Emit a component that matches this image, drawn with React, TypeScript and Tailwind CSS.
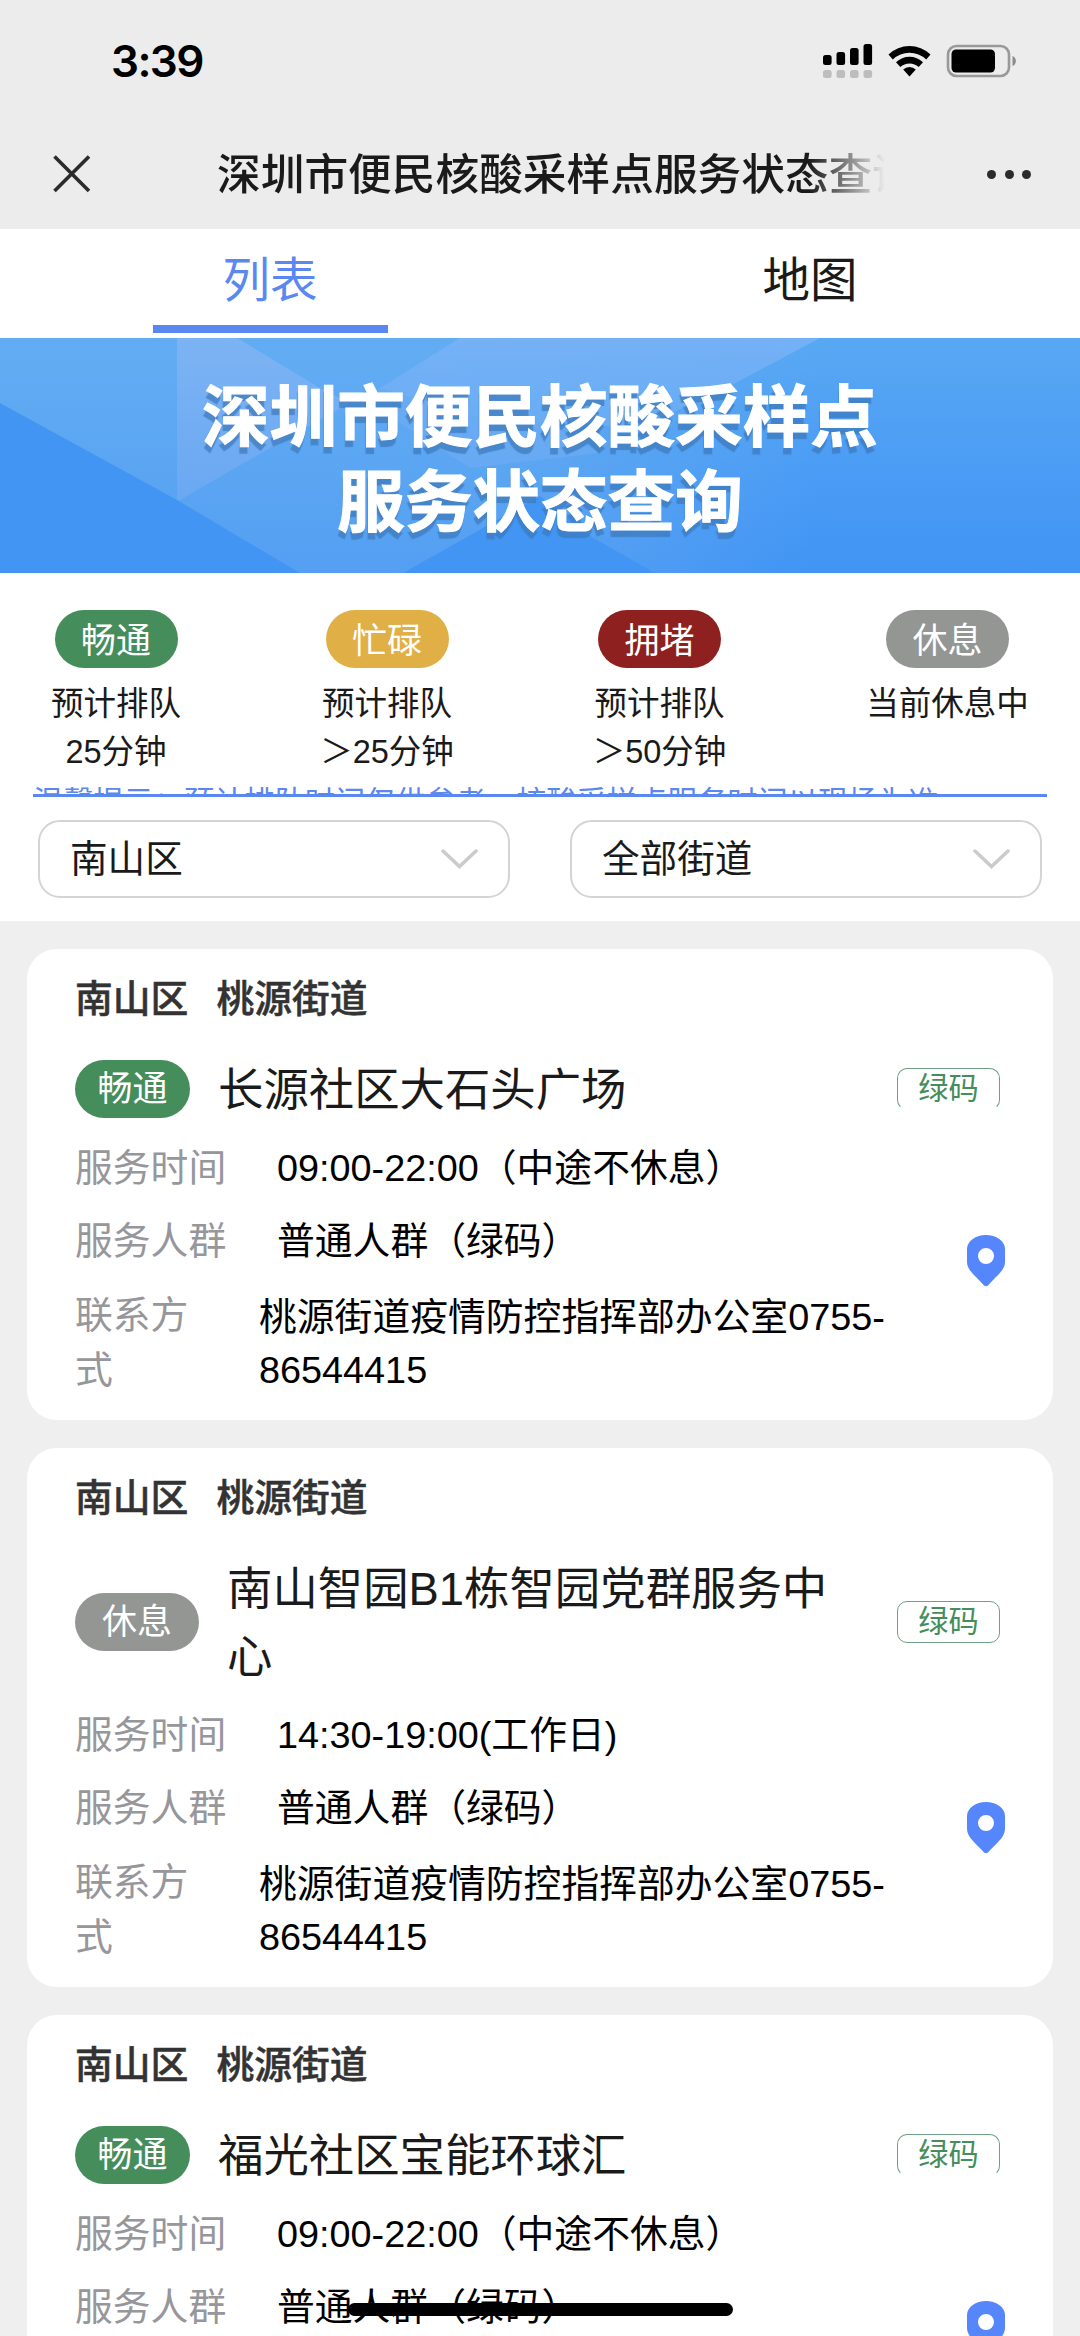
import { clsx } from 'clsx';

type Status = 'smooth' | 'busy' | 'crowded' | 'resting';

interface Site {
  district: string;
  street: string;
  status: Status;
  name: string;
  hours: string;
  audience: string;
  contact: string;
  code: string;
}

const STATUS_LABEL: Record<Status, string> = {
  smooth: '畅通',
  busy: '忙碌',
  crowded: '拥堵',
  resting: '休息',
};

const STATUS_COLOR: Record<Status, string> = {
  smooth: 'bg-[#458d5b]',
  busy: 'bg-[#e0af45]',
  crowded: 'bg-[#8f2020]',
  resting: 'bg-[#949694]',
};

const LEGEND: { status: Status; lines: string[]; column: string }[] = [
  { status: 'smooth', lines: ['预计排队', '25分钟'], column: 'w-[232px]' },
  { status: 'busy', lines: ['预计排队', '＞25分钟'], column: 'w-[310px]' },
  { status: 'crowded', lines: ['预计排队', '＞50分钟'], column: 'w-[235px]' },
  { status: 'resting', lines: ['当前休息中'], column: 'w-[303px] pl-[38px]' },
];

const SITES: Site[] = [
  {
    district: '南山区',
    street: '桃源街道',
    status: 'smooth',
    name: '长源社区大石头广场',
    hours: '09:00-22:00（中途不休息）',
    audience: '普通人群（绿码）',
    contact: '桃源街道疫情防控指挥部办公室0755-\n86544415',
    code: '绿码',
  },
  {
    district: '南山区',
    street: '桃源街道',
    status: 'resting',
    name: '南山智园B1栋智园党群服务中心',
    hours: '14:30-19:00(工作日)',
    audience: '普通人群（绿码）',
    contact: '桃源街道疫情防控指挥部办公室0755-\n86544415',
    code: '绿码',
  },
  {
    district: '南山区',
    street: '桃源街道',
    status: 'smooth',
    name: '福光社区宝能环球汇',
    hours: '09:00-22:00（中途不休息）',
    audience: '普通人群（绿码）',
    contact: '桃源街道疫情防控指挥部办公室0755-\n86544415',
    code: '绿码',
  },
];

export default function App() {
  return (
    <div className="relative flex h-[2336px] w-[1080px] flex-col overflow-hidden bg-[#efefef] font-['Liberation_Sans','Noto_Sans_CJK_SC',sans-serif] text-[#1a1a1a]">
      <StatusBar />
      <TitleBar />
      <Tabs />
      <Banner />
      <section className="h-[348px] shrink-0 bg-white pt-[37px]">
        <Legend />
        <Notice />
        <div className="mt-[23px] flex justify-between px-[38px]">
          <Select value="南山区" />
          <Select value="全部街道" />
        </div>
      </section>
      <main className="flex flex-col gap-7 px-[27px] pt-7">
        {SITES.map((site) => (
          <SiteCard key={site.name} site={site} />
        ))}
      </main>
      {/* Home indicator floats over the list */}
      <div className="absolute top-[2303px] left-[348px] h-[13px] w-[385px] rounded-full bg-black" />
    </div>
  );
}

function StatusBar() {
  return (
    <div className="flex h-[120px] shrink-0 items-start justify-between bg-[#ececec] pr-[63px] pl-[111px]">
      <span className="mt-[34px] font-['Inter',sans-serif] text-[44px] leading-[54px] font-semibold tracking-[-1.6px] text-black">
        3:39
      </span>
      <div className="mt-[43px] flex items-start">
        <svg width="50" height="36" viewBox="0 0 50 36">
          {[12, 9, 5, 1].map((y, i) => (
            <g key={y}>
              <rect x={i * 13.5} y={y} width="8.6" height={22 - y} rx="2.5" fill="#000" />
              <rect x={i * 13.5} y="27" width="8.6" height="8" rx="2.5" fill="#bdbdbd" />
            </g>
          ))}
        </svg>
        <svg className="ml-[15px]" width="44" height="36" viewBox="0 0 44 36">
          <path d="M0.5 11.5a30.5 30.5 0 0 1 42 0l-4.3 4.9a24.2 24.2 0 0 0-33.4 0z" />
          <path d="M8 19.2a19.6 19.6 0 0 1 27 0l-4.3 4.9a13.4 13.4 0 0 0-18.4 0z" />
          <path d="M15.2 26.6a9 9 0 0 1 12.6 0L21.5 33.5z" />
        </svg>
        <svg className="ml-[14px]" width="71" height="36" viewBox="0 0 71 36">
          <rect x="2" y="3" width="61" height="30" rx="8.5" fill="none" stroke="#999" strokeWidth="2.6" />
          <rect x="5.5" y="6.5" width="43.5" height="23" rx="4.5" />
          <path d="M66.500 13c4.500 1.500 4.500 8.500 0 10z" fill="#8c8c8c" />
        </svg>
      </div>
    </div>
  );
}

function TitleBar() {
  return (
    <div className="flex h-[109px] shrink-0 items-center bg-[#ececec] pl-[53px]">
      <svg className="mb-[2px]" width="38" height="38" viewBox="0 0 38 38" fill="none" stroke="#2b2b2b" strokeWidth="3.6">
        <path d="M1.500 1.500 36 36M36 1.500 1.500 36" />
      </svg>
      <h1 className="ml-[126px] w-[700px] text-[43.7px] leading-[60px] font-medium whitespace-nowrap [mask-image:linear-gradient(to_right,#000_592px,transparent_668px)]">
        深圳市便民核酸采样点服务状态查询
      </h1>
      <div className="ml-[70px] flex gap-[8.5px]">
        <span className="size-[9px] rounded-full bg-[#2b2b2b]" />
        <span className="size-[9px] rounded-full bg-[#2b2b2b]" />
        <span className="size-[9px] rounded-full bg-[#2b2b2b]" />
      </div>
    </div>
  );
}

function Tabs() {
  return (
    <nav className="flex h-[109px] shrink-0 bg-white text-[47.5px]">
      <div className="flex w-1/2 flex-col items-center text-[#5b87f0]">
        <span className="h-24 leading-[104px]">列表</span>
        <span className="h-2 w-[235px] bg-[#5b87f0]" />
      </div>
      <div className="flex w-1/2 flex-col items-center">
        <span className="h-24 leading-[104px]">地图</span>
      </div>
    </nav>
  );
}

function Banner() {
  return (
    <header className="grid h-[235px] shrink-0 overflow-hidden">
      <BannerArt />
      <h2 className="col-start-1 row-start-1 pt-[37px] text-center text-[67.6px] leading-[85px] font-bold text-white [-webkit-text-stroke:1px_#fff] [text-shadow:-1px_7px_1px_rgba(60,120,185,0.7)]">
        深圳市便民核酸采样点
        <br />
        服务状态查询
      </h2>
    </header>
  );
}

function BannerArt() {
  return (
    <svg className="col-start-1 row-start-1" width="1080" height="235" viewBox="0 0 1080 235">
      <defs>
        <linearGradient id="sky" x1="0" y1="0" x2="0" y2="1">
          <stop offset="0" stopColor="#62adf2" />
          <stop offset="1" stopColor="#559ff3" />
        </linearGradient>
        <linearGradient id="deep" x1="0" y1="0" x2="0" y2="1">
          <stop offset="0" stopColor="#58a8f3" />
          <stop offset="0.6" stopColor="#4a9bf5" />
          <stop offset="1" stopColor="#4094f3" />
        </linearGradient>
        <linearGradient id="edge" x1="0" y1="0" x2="1" y2="0">
          <stop offset="0" stopColor="#fff" stopOpacity="0" />
          <stop offset="1" stopColor="#fff" />
        </linearGradient>
        <mask id="fade">
          <rect x="560" width="260" height="235" fill="url(#edge)" />
          <rect x="820" width="260" height="235" fill="#fff" />
        </mask>
        <linearGradient id="haze" x1="0" y1="0" x2="0" y2="1">
          <stop offset="0" stopColor="#7cb3f4" />
          <stop offset="1" stopColor="#6aa8f2" />
        </linearGradient>
        <linearGradient id="beam" x1="0" y1="0" x2="0" y2="1">
          <stop offset="0" stopColor="#7ab2f6" />
          <stop offset="1" stopColor="#68adf5" />
        </linearGradient>
      </defs>
      <rect width="1080" height="235" fill="url(#sky)" />
      <rect width="1080" height="235" fill="url(#deep)" mask="url(#fade)" />
      <path d="M177 0H237L320 50 350 65 270 110 180 162H177z" fill="url(#haze)" />
      <path d="M350 65 440 20 600 115 470 130 400 85z" fill="#74aef3" opacity="0.5" />
      <path d="M460 0H820L730 48 640 90 480 80 380 50z" fill="url(#beam)" opacity="0.85" />
      <path d="M0 65 177 162 300 235H0z" fill="#4295f3" />
      <path d="M403 235 540 158 590 198 655 235z" fill="#4295f3" />
    </svg>
  );
}

function Pill({ status, className }: { status: Status; className?: string }) {
  return (
    <span
      className={clsx(
        'flex h-[58px] shrink-0 justify-center rounded-full text-[35px] text-white',
        STATUS_COLOR[status],
        className,
      )}
    >
      {STATUS_LABEL[status]}
    </span>
  );
}

function Legend() {
  return (
    <div className="flex h-[175px]">
      {LEGEND.map(({ status, lines, column }) => (
        <div key={status} className={clsx('flex shrink-0 flex-col items-center', column)}>
          <Pill status={status} className="w-[123px] leading-[62px]" />
          <div className="mt-[12px] text-center text-[32.5px] leading-[48px]">
            {lines.map((line) => (
              <div key={line}>{line}</div>
            ))}
          </div>
        </div>
      ))}
    </div>
  );
}

/* Only the top of the notice shows, the rest is cut by the box border. */
function Notice() {
  return (
    <div className="mx-[33px] h-[12px] overflow-hidden border-b-[3px] border-[#5b87f0] text-[30.2px] leading-[36px] whitespace-nowrap text-[#5b87f0]">
      温馨提示：预计排队时间仅供参考，核酸采样点服务时间以现场为准
    </div>
  );
}

function Select({ value }: { value: string }) {
  return (
    <div className="flex h-[78px] w-[472px] items-center justify-between rounded-[22px] border-2 border-[#d4d4d4] pr-[30px] pl-[30px] text-[37.6px] leading-[74px]">
      {value}
      <svg width="37" height="20" viewBox="0 0 37 20" fill="none" stroke="#cbcbcb" strokeWidth="3.500" strokeLinecap="round">
        <path d="M2 2 18.500 17.500 35 2" />
      </svg>
    </div>
  );
}

function SiteCard({ site }: { site: Site }) {
  const resting = site.status === 'resting';
  return (
    <article className="shrink-0 rounded-[30px] bg-white px-12 pt-[25px] pb-[22px]">
      <div className="flex gap-7 text-[37.8px] leading-[50px] font-medium text-[#333] [-webkit-text-stroke:0.5px_#333]">
        <span>{site.district}</span>
        <span>{site.street}</span>
      </div>

      <div className="mt-[31px] flex items-center">
        <Pill
          status={site.status}
          className={clsx('leading-[58px]', resting ? 'w-[124px]' : 'w-[115px]')}
        />
        <h3 className="relative top-[2px] ml-[28px] w-[620px] text-[45.4px] leading-[68px]">
          {site.name}
        </h3>
        <span
          className={clsx(
            'mr-[5px] ml-auto flex h-[42px] w-[103px] items-center justify-center rounded-[10px] border border-[#6f9f85] text-[30.2px] leading-[40px] text-[#458d5b]',
            !resting && 'border-b-transparent',
          )}
        >
          {site.code}
        </span>
      </div>

      <div className="flex items-center justify-between pt-[9px] text-[37.8px]">
        <div>
          <Field label="服务时间" value={site.hours} />
          <Field label="服务人群" value={site.audience} />
          <div className="mt-2.5 flex">
            <span className="w-[130px] leading-[55px] text-[#96969b]">联系方式</span>
            <span className="ml-[54px] pt-[3px] leading-[53px] whitespace-pre-line text-black">
              {site.contact}
            </span>
          </div>
        </div>
        <PinIcon />
      </div>
    </article>
  );
}

function Field({ label, value }: { label: string; value: string }) {
  return (
    <div className="flex h-[73px] items-center leading-[73px]">
      <span className="w-[202px] text-[#96969b]">{label}</span>
      <span className="text-black">{value}</span>
    </div>
  );
}

function PinIcon() {
  return (
    <svg className="mb-2" width="38" height="52" viewBox="0 0 38 52" fill="#5686fb">
      <path
        fillRule="evenodd"
        d="M19 0C29 0 38 6 38 14V27C38 36 27 43 21 50.500Q19 52 17 50.500C11 43 0 36 0 27V14C0 6 9 0 19 0zM19 13a8 8 0 1 0 0 16a8 8 0 1 0 0-16z"
      />
    </svg>
  );
}
